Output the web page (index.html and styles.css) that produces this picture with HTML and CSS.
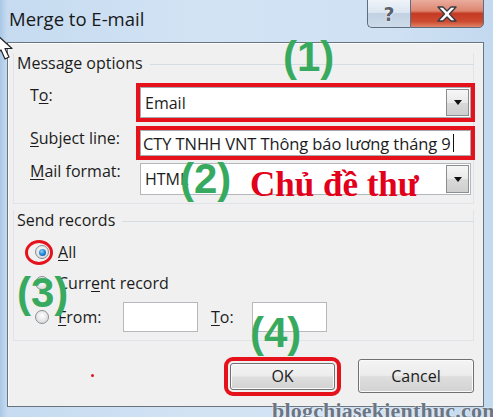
FILE: index.html
```html
<!DOCTYPE html>
<html lang="vi">
<head>
<meta charset="utf-8">
<title>Merge to E-mail</title>
<link rel="stylesheet" href="styles.css">
</head>
<body>
<div class="window">
  <div class="titlebar">
    <div class="title">Merge to E-mail</div>
    <div class="caps">
      <div class="cap help"><span>?</span></div>
      <div class="cap close">
        <svg width="24" height="18" viewBox="0 0 24 18"><path d="M3 2h5l4 4 4-4h5l-6.5 7 6.5 7h-5l-4-4-4 4H3l6.5-7z" fill="#fff" stroke="#3b3b46" stroke-width="1.4" stroke-linejoin="round"/></svg>
      </div>
    </div>
  </div>

  <div class="panel">
    <div class="group g1">
      <div class="group-head"><span>Message options</span><i class="rule"></i></div>
      <div class="row row1">
        <label class="lbl">T<u>o</u>:</label>
        <div class="field combo combo-to marked"><span class="val">Email</span><span class="drop"><i></i></span></div>
      </div>
      <div class="row row2">
        <label class="lbl"><u>S</u>ubject line:</label>
        <div class="field textbox marked"><span class="val">CTY TNHH VNT Thông báo lương tháng 9</span><span class="caret"></span></div>
      </div>
      <div class="row row3">
        <label class="lbl"><u>M</u>ail format:</label>
        <div class="field combo combo-fmt"><span class="val">HTML</span><span class="drop"><i></i></span></div>
      </div>
    </div>

    <div class="group g2">
      <div class="group-head"><span>Send records</span><i class="rule"></i></div>
      <div class="radio-row rr1"><span class="radio checked"></span><span class="rtext"><u>A</u>ll</span></div>
      <div class="radio-row rr2"><span class="radio"></span><span class="rtext">Curr<u>e</u>nt record</span></div>
      <div class="radio-row rr3">
        <span class="radio"></span><span class="rtext from-text"><u>F</u>rom:</span>
        <span class="small-box"></span>
        <span class="to-text"><u>T</u>o:</span>
        <span class="small-box"></span>
      </div>
    </div>

    <div class="buttons">
      <button class="btn ok">OK</button>
      <button class="btn cancel">Cancel</button>
    </div>
  </div>

  <!-- annotations drawn over the dialog -->
  <span class="note n1">(1)</span>
  <span class="note n2">(2)</span>
  <span class="note n3">(3)</span>
  <span class="note n4">(4)</span>
  <span class="subject-note">Chủ đề thư</span>
  <span class="ring"></span>
  <span class="dot"></span>
  <span class="watermark">blogchiasekienthuc.com</span>
  <svg class="cursor" width="22" height="30" viewBox="0 0 22 30"><path d="M1 1v21l5-5 4 9 4-2-4-8.5h7z" fill="#fff" stroke="#222" stroke-width="1.2" stroke-linejoin="round"/></svg>
</div>
</body>
</html>
```

FILE: styles.css
```css
* { box-sizing: border-box; }
html, body { margin: 0; padding: 0; }
body {
  width: 493px;
  height: 417px;
  overflow: hidden;
  font-family: "Open Sans", "Noto Sans", sans-serif;
  font-size: 16px;
  color: #1c1c1c;
}
u { text-decoration-thickness: 1px; text-underline-offset: 2px; }

.window {
  position: relative;
  width: 493px;
  height: 417px;
  overflow: hidden;
  display: flex;
  flex-direction: column;
  background: linear-gradient(90deg, #a9c7e6 0px, #c6dbf0 7px, #d2e3f4 40%, #cfe1f3 80%, #c3d9ef 100%);
}

/* title bar */
.titlebar {
  height: 42px;
  flex-shrink: 0;
  display: flex;
  justify-content: space-between;
  align-items: flex-start;
}
.title {
  margin: 7px 0 0 9px;
  font-size: 18.5px;
  line-height: 24px;
  color: #181818;
}
.caps { display: flex; margin: -2px 9px 0 0; }
.cap {
  height: 30px;
  display: flex;
  align-items: center;
  justify-content: center;
  border: 1px solid #5f6d80;
}
.help {
  width: 43px;
  border-right: none;
  border-radius: 0 0 0 5px;
  background: linear-gradient(180deg, #f1f5fa 0%, #dbe5f0 48%, #c2d1e2 52%, #cddbea 100%);
}
.help span {
  font: bold 19px "DejaVu Sans", sans-serif;
  color: #5a6270;
  text-shadow: 0 0 1px #fff, 0 0 2px #fff;
  margin-top: 2px;
}
.close {
  width: 74px;
  border-radius: 0 0 5px 0;
  background: linear-gradient(180deg, #eab0a2 0%, #dd8670 42%, #c53b23 52%, #cc4a30 80%, #e08466 100%);
}
.close svg { margin-top: 2px; }

/* dialog body */
.panel {
  margin: 0 9px 0 7px;
  height: 365px;
  background: #f0f0f0;
  border: 1px solid #69747f;
  box-shadow: inset 1px 1px 0 #fbfbfb;
  display: flex;
  flex-direction: column;
}

.group {
  margin: 0 9px 0 5px;
  border: 1px solid #e0e4e8;
  border-top: none;
  padding-bottom: 8px;
}
.g1 { margin-top: 10px; }
.g2 { margin-top: 6px; }
.group-head {
  display: flex;
  align-items: center;
  height: 20px;
  margin-left: -1px;
  margin-right: -1px;
}
.group-head span { padding-left: 4px; white-space: nowrap; }
.rule {
  flex: 1;
  height: 1px;
  margin: 3px 0 0 7px;
  background: #d5dde4;
}

.row { display: flex; margin-left: 16px; }
.row1 { margin-top: 14px; }
.row2 { margin-top: 12px; }
.row3 { margin-top: 7px; }
.lbl {
  width: 110px;
  flex-shrink: 0;
  line-height: 20px;
  margin-top: -2px;
}

.field {
  width: 331px;
  background: #fff;
  border: 1px solid #a6a9ae;
  display: flex;
  align-items: center;
}
.field .val { flex: 1; white-space: nowrap; }
.combo .val { padding-left: 4px; }
.combo-to { height: 31px; }
.combo-fmt { height: 32px; border-color: #b3b6ba; }
.textbox { height: 26px; }
.textbox .val { flex: 0 0 auto; padding-left: 2px; font-size: 16.5px; letter-spacing: -0.1px; }
.caret { width: 1px; height: 18px; background: #111; margin-left: 2px; }
.marked { outline: 4px solid #e5121c; outline-offset: 0; }

.drop {
  width: 23px;
  align-self: stretch;
  margin: 1px 1px 1px 0;
  border: 1px solid #8a8d92;
  background: linear-gradient(180deg, #f6f6f6 0%, #e9e9e9 50%, #d9d9d9 51%, #cfcfcf 100%);
  display: flex;
  align-items: center;
  justify-content: center;
}
.drop i {
  width: 0; height: 0;
  border-left: 4px solid transparent;
  border-right: 4px solid transparent;
  border-top: 5px solid #111;
}

/* radio rows */
.radio-row { display: flex; align-items: center; padding-left: 21px; }
.rr1 { height: 20px; margin-top: 12px; }
.rr2 { height: 20px; margin-top: 11px; }
.rr3 { height: 30px; margin-top: 9px; }
.radio {
  width: 14px; height: 14px;
  border-radius: 50%;
  border: 1px solid #8b8f94;
  background: radial-gradient(circle at 50% 40%, #ffffff 0%, #eaeaea 45%, #cfd1d3 100%);
  flex-shrink: 0;
  display: flex;
  align-items: center;
  justify-content: center;
}
.radio.checked::after {
  content: "";
  width: 7px; height: 7px;
  border-radius: 50%;
  background: radial-gradient(circle at 40% 35%, #8fd3ff 0%, #2a8ad6 45%, #0d4f9e 100%);
}
.rtext { margin-left: 9px; line-height: 20px; white-space: nowrap; }
.from-text { width: 65px; }
.small-box { width: 75px; height: 30px; background: #fff; border: 1px solid #b5b8bc; }
.to-text { width: 41px; margin-left: 13px; }

/* buttons */
.buttons {
  display: flex;
  justify-content: flex-end;
  align-items: center;
  height: 34px;
  margin: 18px 9px 0 0;
}
.btn {
  font: 16px "Open Sans", "Noto Sans", sans-serif;
  color: #1c1c1c;
  border: 1px solid #707070;
  border-radius: 3px;
  background: linear-gradient(180deg, #f4f4f4 0%, #ececec 48%, #dedede 52%, #d2d2d2 100%);
  box-shadow: inset 0 0 0 1px #fafafa;
  padding: 0;
}
.ok {
  width: 105px; height: 27px;
  margin-right: 23px;
  outline: 4px solid #e5121c;
  outline-offset: 2px;
}
.cancel { width: 116px; height: 34px; }

/* overlays */
.note {
  position: absolute;
  font: bold 42px "Liberation Sans", sans-serif;
  color: #38aa60;
  line-height: 1;
}
.n1 { left: 283px; top: 36px; }
.n2 { left: 180px; top: 158px; }
.n3 { left: 17px; top: 272px; }
.n4 { left: 250px; top: 312px; }
.subject-note {
  position: absolute;
  left: 250px; top: 167px;
  font: bold 35px "Liberation Serif", serif;
  color: #e2001a;
  line-height: 1;
}
.ring {
  position: absolute;
  left: 25px; top: 240px;
  width: 28px; height: 25px;
  border: 3px solid #e5121c;
  border-radius: 50%;
}
.dot {
  position: absolute;
  left: 91px; top: 374px;
  width: 3px; height: 3px;
  border-radius: 50%;
  background: #e01020;
}
.watermark {
  position: absolute;
  left: 272px; top: 400px;
  font: bold 22px "Liberation Serif", serif;
  letter-spacing: 0.2px;
  color: #6c7683;
  text-shadow: 0 0 2px #fff;
  line-height: 1;
  white-space: nowrap;
}
.cursor { position: absolute; left: -5px; top: 33px; }
```
